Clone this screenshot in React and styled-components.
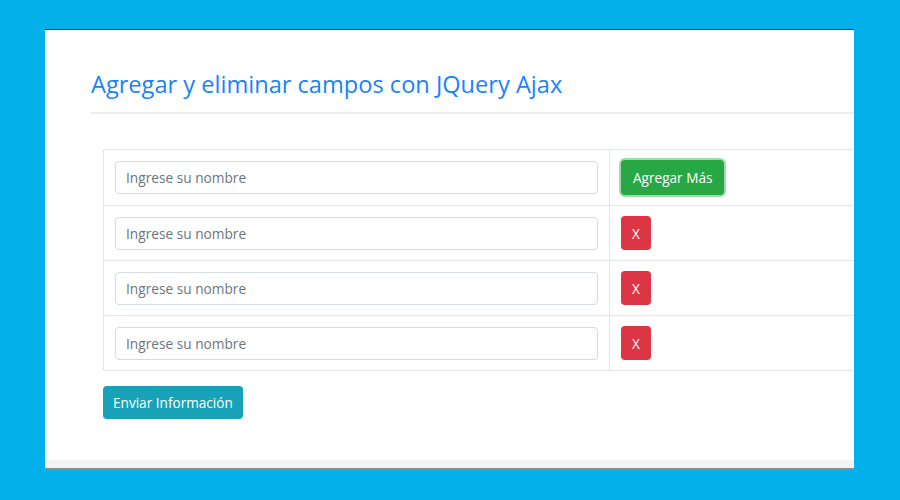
import React from 'react';
import styled, { createGlobalStyle } from "styled-components";

const GlobalStyle = createGlobalStyle`
  html, body {
    margin: 0;
    padding: 0;
    background: #03b0e9;
    font-family: "Open Sans", "Noto Sans", sans-serif;
  }
`;

const StyledStage = styled.div`
  width: 900px;
  height: 500px;
  padding: 29px 0 0 45px;
  box-sizing: border-box;
  overflow: hidden;
`;

const StyledWindow = styled.div`
  width: 809px;
  background: #ffffff;
  border-top: 1px solid #2b4150;
  overflow: hidden;
`;

const StyledPage = styled.div`
  height: 430px;
  padding: 40px 0 0 46px;
  box-sizing: border-box;
`;

const StyledTitle = styled.h1`
  margin: 0;
  font-size: 23.6px;
  font-weight: 400;
  line-height: 1.2;
  color: #1a82fb;
  white-space: nowrap;
`;

const StyledRule = styled.div`
  width: 900px;
  height: 2px;
  margin-top: 14px;
  background: #eeeeee;
`;

const StyledForm = styled.form`
  margin: 35px 0 0 12px;
`;

const StyledTable = styled.table`
  width: 800px;
  border-collapse: collapse;
`;

const StyledCell = styled.td`
  width: ${(props) => props.$width || "auto"};
  padding: 10px 11px;
  border: 1px solid #e3e6ea;
  vertical-align: middle;
`;

const StyledInput = styled.input`
  display: block;
  width: 100%;
  height: 33px;
  box-sizing: border-box;
  padding: 0 10px;
  border: 1px solid #d5dae0;
  border-radius: 4px;
  font-family: inherit;
  font-size: 13.7px;
  color: #495057;
  background: #fff;

  &::placeholder {
    color: #6c757d;
  }
`;

const StyledButton = styled.button`
  height: ${(props) => props.$height || "34px"};
  padding: 0 ${(props) => props.$padX || "12px"};
  border: none;
  border-radius: 4px;
  background: ${(props) => props.$bg};
  color: #fff;
  font-family: inherit;
  font-size: 13.6px;
  line-height: 1;
  cursor: pointer;
  box-shadow: ${(props) => props.$glow ? "0 0 0 2px rgba(72, 180, 97, 0.5)" : "none"};
`;

const StyledSubmit = styled(StyledButton)`
  margin-top: 15px;
`;

const StyledFooter = styled.div`
  height: 8px;
  background: #f3f3f3;
  border-bottom: 2px solid #8b8b8b;
`;

const rows = [1, 2, 3, 4];

const App = () => {
  return (
    <>
      <GlobalStyle />
      <StyledStage>
        <StyledWindow>
          <StyledPage>
            <StyledTitle>Agregar y eliminar campos con JQuery Ajax</StyledTitle>
            <StyledRule />
            <StyledForm onSubmit={(e) => e.preventDefault()}>
              <StyledTable>
                <tbody>
                  {rows.map((id) => (
                    <tr key={id}>
                      <StyledCell $width={"483px"}>
                        <StyledInput type="text" placeholder="Ingrese su nombre" />
                      </StyledCell>
                      <StyledCell>
                        {id === 1 ? (
                          <StyledButton type="button" $bg={"#28a745"} $height={"35px"} $glow>
                            Agregar Más
                          </StyledButton>
                        ) : (
                          <StyledButton type="button" $bg={"#dc3545"} $padX={"11px"}>
                            X
                          </StyledButton>
                        )}
                      </StyledCell>
                    </tr>
                  ))}
                </tbody>
              </StyledTable>
              <StyledSubmit type="submit" $bg={"#17a2b8"} $height={"33px"} $padX={"10px"}>
                Enviar Información
              </StyledSubmit>
            </StyledForm>
          </StyledPage>
          <StyledFooter />
        </StyledWindow>
      </StyledStage>
    </>
  );
}

export default App;
